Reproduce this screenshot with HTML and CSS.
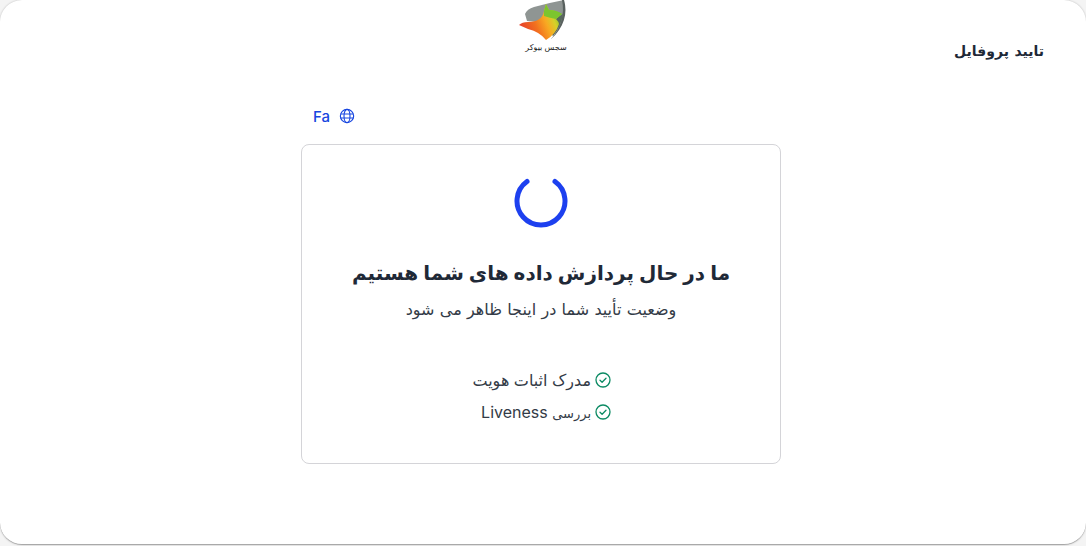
FILE: index.html
```html
<!DOCTYPE html>
<html lang="fa" dir="rtl">
<head>
    <meta charset="UTF-8">
    <meta name="viewport" content="width=device-width, initial-scale=1.0">
    <title>تایید پروفایل</title>
    <link rel="stylesheet" href="styles.css">
</head>
<body>
<div class="shell">
    <header class="topbar">
        <h1 class="page-title">تایید پروفایل</h1>
        <div class="logo">
            <svg class="logo-mark" viewBox="0 0 50 42" width="50" height="42">
                <defs>
                    <linearGradient id="fox" x1="0" y1="0.7" x2="1" y2="0.35">
                        <stop offset="0" stop-color="#e53a2b"/>
                        <stop offset="0.38" stop-color="#f2701f"/>
                        <stop offset="0.62" stop-color="#f8a922"/>
                        <stop offset="0.8" stop-color="#d6d02a"/>
                        <stop offset="1" stop-color="#6fbe2e"/>
                    </linearGradient>
                </defs>
                <path d="M7 14Q9 9 16 7Q30 3 46 0Q49 20 35 36L20 22L9 21Z" fill="#8f9593"/>
                <path d="M32 22L45 14Q43 26 35 36Z" fill="#56695c"/>
                <path d="M28 4L31 10Q38 10 44 14L38 19Q41 22 41 24Q38 34 28 40Q22 32 10 29L1 25Q4 22 10 22Q24 22 26 11Z" fill="url(#fox)"/>
                <path d="M28 4L31 10Q38 10 44 14L38 19Q32 18 26 16L26 11Z" fill="#7cc52e"/>
                <path d="M46 0C50 13 46 28 33 39C43 28 47 14 44 0Z" fill="#59615f"/>
            </svg>
            <span class="logo-name">سجس بیوکر</span>
        </div>
        <div class="topbar-side"></div>
    </header>

    <main class="content">
        <div class="lang-row">
            <button class="lang-btn" dir="ltr">
                <span>Fa</span>
                <svg viewBox="0 0 24 24" width="16" height="16" fill="none" stroke="currentColor" stroke-width="1.7">
                    <circle cx="12" cy="12" r="10"/>
                    <ellipse cx="12" cy="12" rx="4.5" ry="10"/>
                    <path d="M2.5 9h19M2.5 15h19"/>
                </svg>
            </button>
        </div>

        <section class="card">
            <svg class="spinner" viewBox="0 0 54 54" width="54" height="54" fill="none">
                <path d="M13 7.5A24 24 0 1 0 41 7.5" stroke="#1d40ef" stroke-width="5" stroke-linecap="round"/>
            </svg>
            <h2 class="card-title">ما در حال پردازش داده های شما هستیم</h2>
            <p class="card-text">وضعیت تأیید شما در اینجا ظاهر می شود</p>
            <ul class="checks">
                <li class="check-item">
                    <svg viewBox="0 0 16 16" width="16" height="16" fill="none" stroke="#0b8a63" stroke-width="1.3">
                        <circle cx="8" cy="8" r="7"/>
                        <path d="M5 8.2l2.1 2L11 6.3" stroke-linecap="round" stroke-linejoin="round"/>
                    </svg>
                    <span>مدرک اثبات هویت</span>
                </li>
                <li class="check-item">
                    <svg viewBox="0 0 16 16" width="16" height="16" fill="none" stroke="#0b8a63" stroke-width="1.3">
                        <circle cx="8" cy="8" r="7"/>
                        <path d="M5 8.2l2.1 2L11 6.3" stroke-linecap="round" stroke-linejoin="round"/>
                    </svg>
                    <span><span class="check-word">بررسی</span> Liveness</span>
                </li>
            </ul>
        </section>
    </main>
</div>
</body>
</html>
```

FILE: styles.css
```css
* {
    box-sizing: border-box;
}
body {
    margin: 0;
    height: 546px;
    overflow: hidden;
    background-color: #f4f4f4;
    font-family: Inter, "DejaVu Sans", sans-serif;
    color: #1f2937;
}
.shell {
    height: 545px;
    background-color: white;
    border-radius: 22px;
    border-bottom: 1px solid #a9a9a9;
    box-shadow: 0 0 2px rgba(0, 0, 0, 0.25);
}
.topbar {
    display: grid;
    grid-template-columns: 1fr 50px 1fr;
    align-items: start;
    height: 95px;
    padding: 0 42px;
}
.page-title {
    margin: 41px 0 0;
    font-size: 14px;
    line-height: 20px;
    font-weight: 600;
    word-spacing: 2px;
}
.logo {
    display: flex;
    flex-direction: column;
    align-items: center;
}
.logo-name {
    margin-left: 6px;
    font-size: 8px;
    line-height: 10px;
    white-space: nowrap;
    color: #222;
}
.content {
    width: 480px;
    margin-right: 305px;
}
.lang-row {
    display: flex;
    justify-content: flex-end;
    height: 49px;
    padding: 11px 0 0 12px;
}
.lang-btn {
    display: flex;
    align-items: center;
    gap: 9px;
    height: 20px;
    padding: 0;
    border: none;
    background: none;
    color: #1746e0;
    font-family: Inter, "DejaVu Sans", sans-serif;
    font-size: 15px;
    font-weight: 500;
    cursor: pointer;
}
.card {
    height: 320px;
    padding-top: 29px;
    border: 1px solid #d4d4d8;
    border-radius: 8px;
    text-align: center;
}
.spinner {
    display: block;
    margin: 0 auto;
}
.card-title {
    margin: 29px 0 0;
    font-size: 20px;
    line-height: 32px;
    font-weight: 600;
}
.card-text {
    margin: 9px 0 0;
    font-size: 16px;
    line-height: 22px;
    word-spacing: 0.8px;
    color: #333b47;
}
.checks {
    display: flex;
    flex-direction: column;
    align-items: center;
    gap: 8px;
    margin: 48px 0 0;
    padding: 0;
    list-style: none;
}
.check-item {
    display: flex;
    align-items: center;
    gap: 4px;
    width: 140px;
    height: 24px;
    font-size: 16px;
    white-space: nowrap;
    color: #333b47;
}
.check-word {
    font-size: 13px;
}
```
